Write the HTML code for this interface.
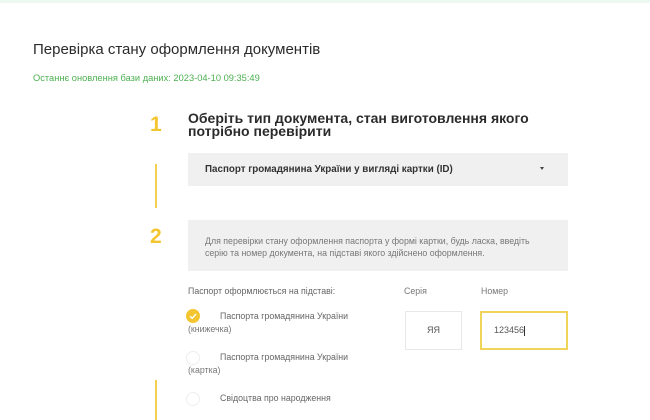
<!DOCTYPE html>
<html><head><meta charset="utf-8"><style>
*{margin:0;padding:0;box-sizing:border-box}
body{width:650px;height:420px;overflow:hidden;background:#fff;font-family:"Liberation Sans",sans-serif;position:relative;color:#333}
.a{position:absolute;white-space:nowrap}
</style></head><body>
<div class="a" style="left:0;top:0;width:650px;height:3px;background:#eef8f3"></div>
<div class="a" style="left:33px;top:41px;font-size:15px;color:#2b2b2b">Перевірка стану оформлення документів</div>
<div class="a" style="left:33px;top:73px;font-size:9.3px;color:#4cb050">Останнє оновлення бази даних: 2023-04-10 09:35:49</div>
<div class="a" style="left:150px;top:113px;font-size:21px;font-weight:bold;color:#f3c530">1</div>
<div class="a" style="left:188px;top:112px;font-size:14px;font-weight:bold;line-height:12.5px;color:#2b2b2b">Оберіть тип документа, стан виготовлення якого<br>потрібно перевірити</div>
<div class="a" style="left:188px;top:153px;width:380px;height:33px;background:#f0f0f0"></div>
<div class="a" style="left:205px;top:164px;font-size:9.8px;font-weight:bold;color:#333">Паспорт громадянина України у вигляді картки (ID)</div>
<div class="a" style="left:540px;top:167px;width:0;height:0;border-left:2.5px solid transparent;border-right:2.5px solid transparent;border-top:3px solid #444"></div>
<div class="a" style="left:155px;top:164px;width:1.5px;height:44px;background:#f3d050"></div>
<div class="a" style="left:150px;top:225px;font-size:21px;font-weight:bold;color:#f3c530">2</div>
<div class="a" style="left:188px;top:220px;width:380px;height:51px;background:#f0f0f0"></div>
<div class="a" style="left:205px;top:236px;font-size:8.8px;line-height:11.5px;color:#777">Для перевірки стану оформлення паспорта у формі картки, будь ласка, введіть<br>серію та номер документа, на підставі якого здійснено оформлення.</div>
<div class="a" style="left:188px;top:286px;font-size:8.8px;color:#666">Паспорт оформлюється на підставі:</div>
<div class="a" style="left:404px;top:286px;font-size:8.8px;color:#777">Серія</div>
<div class="a" style="left:481px;top:286px;font-size:8.8px;color:#777">Номер</div>
<div class="a" style="left:186px;top:309px;width:14px;height:14px;border-radius:50%;background:#f3c530"></div>
<svg class="a" style="left:186px;top:309px" width="14" height="14"><path d="M4 7.2 L6.2 9.3 L10 5" stroke="#fff" stroke-width="1.4" fill="none"/></svg>
<div class="a" style="left:220px;top:311px;font-size:8.8px;color:#666">Паспорта громадянина України</div>
<div class="a" style="left:188px;top:324px;font-size:8.8px;color:#777">(книжечка)</div>
<div class="a" style="left:186px;top:351px;width:14px;height:14px;border-radius:50%;border:1px solid #eee"></div>
<div class="a" style="left:220px;top:352px;font-size:8.8px;color:#666">Паспорта громадянина України</div>
<div class="a" style="left:188px;top:365px;font-size:8.8px;color:#777">(картка)</div>
<div class="a" style="left:186px;top:392px;width:14px;height:14px;border-radius:50%;border:1px solid #eee"></div>
<div class="a" style="left:220px;top:393px;font-size:8.8px;color:#666">Свідоцтва про народження</div>
<div class="a" style="left:155px;top:380px;width:1.5px;height:40px;background:#f3d050"></div>
<div class="a" style="left:405px;top:311px;width:57px;height:39px;border:1px solid #e8e8e8;font-size:9px;color:#555;text-align:center;line-height:37px">ЯЯ</div>
<div class="a" style="left:480px;top:311px;width:88px;height:39px;border:2px solid #f0d45a;font-size:9px;color:#555;line-height:35px;padding-left:12px">123456<span style="display:inline-block;width:1px;height:10px;background:#333;vertical-align:middle"></span></div>
</body></html>
